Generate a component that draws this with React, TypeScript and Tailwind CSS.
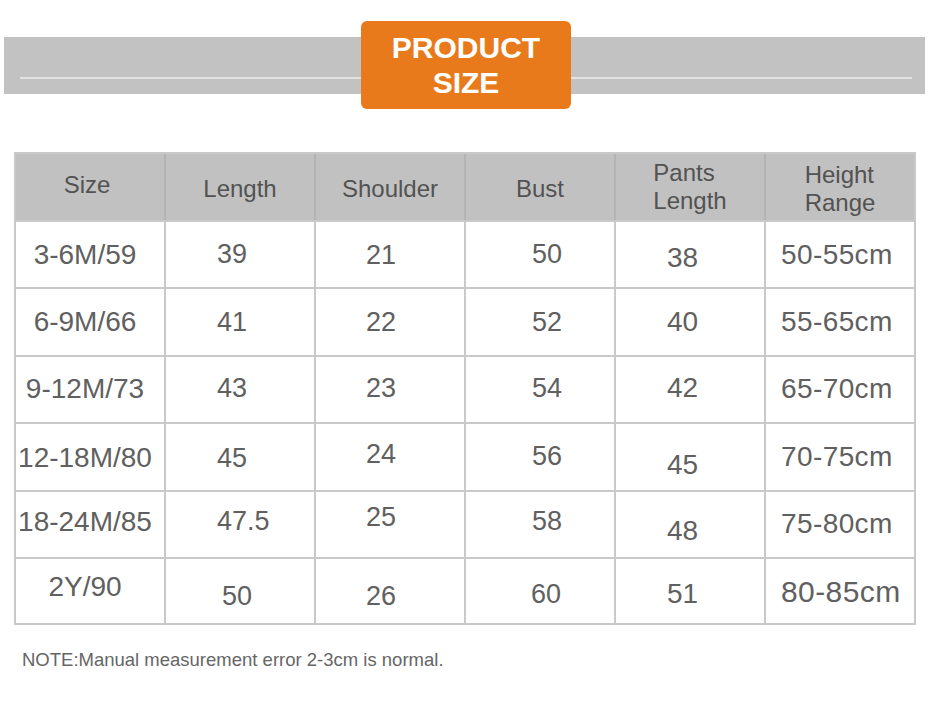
import React from 'react';

type Cell = { text: string; cls?: string };

// column padding / font tweaks, one per column
const COLS = [
  'justify-center pr-[10px] text-[28px]',
  'pl-[51px] text-[27px]',
  'pl-[50px] text-[27px]',
  'pl-[66px] text-[27px]',
  'pl-[51px] text-[28px]',
  'pl-[15px] text-[28px] tracking-[0.4px]',
];

const ROWS: { h: string; cells: Cell[] }[] = [
  {
    h: 'h-[67px]',
    cells: [
      { text: '3-6M/59' },
      { text: '39' },
      { text: '21', cls: 'translate-y-[1px]' },
      { text: '50' },
      { text: '38', cls: 'translate-y-[3px]' },
      { text: '50-55cm' },
    ],
  },
  {
    h: 'h-[68px]',
    cells: [
      { text: '6-9M/66' },
      { text: '41' },
      { text: '22' },
      { text: '52' },
      { text: '40' },
      { text: '55-65cm' },
    ],
  },
  {
    h: 'h-[67px]',
    cells: [
      { text: '9-12M/73', cls: '-translate-y-[1px]' },
      { text: '43', cls: '-translate-y-[1px]' },
      { text: '23', cls: '-translate-y-[1px]' },
      { text: '54', cls: '-translate-y-[1px]' },
      { text: '42', cls: '-translate-y-[2px]' },
      { text: '65-70cm', cls: '-translate-y-[1px]' },
    ],
  },
  {
    h: 'h-[68px]',
    cells: [
      { text: '12-18M/80', cls: 'translate-y-[1px]' },
      { text: '45', cls: 'translate-y-[1px]' },
      { text: '24', cls: '-translate-y-[3px]' },
      { text: '56', cls: '-translate-y-[1px]' },
      { text: '45', cls: 'translate-y-[8px]' },
      { text: '70-75cm' },
    ],
  },
  {
    h: 'h-[67px]',
    cells: [
      { text: '18-24M/85', cls: '-translate-y-[3px]' },
      { text: '47.5', cls: '-translate-y-[3px]' },
      { text: '25', cls: '-translate-y-[7px]' },
      { text: '58', cls: '-translate-y-[3px]' },
      { text: '48', cls: 'translate-y-[6px]' },
      { text: '75-80cm', cls: '-translate-y-[1px]' },
    ],
  },
  {
    h: 'h-[68px]',
    cells: [
      { text: '2Y/90', cls: '-translate-y-[4px]' },
      { text: '50', cls: 'translate-y-[5px] ml-[5px]' },
      { text: '26', cls: 'translate-y-[5px]' },
      { text: '60', cls: 'translate-y-[3px] -ml-[1px]' },
      { text: '51', cls: 'translate-y-[3px]' },
      { text: '80-85cm', cls: 'translate-y-[1px] text-[30px]' },
    ],
  },
];

function BannerSide({ side }: { side: 'left' | 'right' }) {
  return (
    <div
      className={`flex h-[57px] flex-col bg-[#c2c2c2] pt-[40px] ${
        side === 'left' ? 'w-[357px] pl-[16px]' : 'w-[354px] pr-[13px]'
      }`}
    >
      <div className="h-[2px] bg-[#e2e2e2]" />
    </div>
  );
}

export default function App() {
  return (
    <div
      className="h-[715px] w-[930px] overflow-hidden bg-white"
      style={{ fontFamily: '"Liberation Sans", Arial, sans-serif' }}
    >
      {/* title banner */}
      <div className="flex items-center pl-[4px] pt-[21px]">
        <BannerSide side="left" />
        <div className="flex h-[88px] w-[210px] flex-col items-center justify-center rounded-[6px] bg-[#e97a1b] text-[30px] font-bold leading-[35px] text-white">
          <span>PRODUCT</span>
          <span>SIZE</span>
        </div>
        <BannerSide side="right" />
      </div>

      {/* size table */}
      <div className="ml-[14px] mt-[43px] w-[902px] border-l-2 border-t-2 border-[#c9c9c9] text-[#606060]">
        <div className="grid h-[66px] grid-cols-[repeat(6,150px)] bg-[#c1c1c1] text-[24px] leading-[28px] text-[#525252]">
          <div className="flex items-center justify-center border-r-2 border-[#b4b4b4] pr-[6px]">
            <span className="-translate-y-[2px]">Size</span>
          </div>
          <div className="flex items-center justify-center border-r-2 border-[#b4b4b4]">
            <span className="translate-y-[2px]">Length</span>
          </div>
          <div className="flex items-center justify-center border-r-2 border-[#b4b4b4]">
            <span className="translate-y-[2px]">Shoulder</span>
          </div>
          <div className="flex items-center justify-center border-r-2 border-[#b4b4b4]">
            <span className="translate-y-[2px]">Bust</span>
          </div>
          <div className="flex items-center justify-center border-r-2 border-[#b4b4b4]">
            <div className="text-left">
              Pants
              <br />
              Length
            </div>
          </div>
          <div className="flex items-center justify-center border-r-2 border-[#c9c9c9]">
            <div className="translate-y-[2px] text-left">
              Height
              <br />
              Range
            </div>
          </div>
        </div>

        {ROWS.map((row, i) => (
          <div
            key={i}
            className={`grid grid-cols-[repeat(6,150px)] border-t-2 border-[#c9c9c9] ${row.h} ${
              i === ROWS.length - 1 ? 'border-b-2' : ''
            }`}
          >
            {row.cells.map((c, j) => (
              <div key={j} className={`flex items-center border-r-2 border-[#c9c9c9] leading-none ${COLS[j]}`}>
                <span className={c.cls}>{c.text}</span>
              </div>
            ))}
          </div>
        ))}
      </div>

      <p className="pl-[22px] pt-[21px] text-[18.5px] text-[#666666]">
        NOTE:Manual measurement error 2-3cm is normal.
      </p>
    </div>
  );
}
